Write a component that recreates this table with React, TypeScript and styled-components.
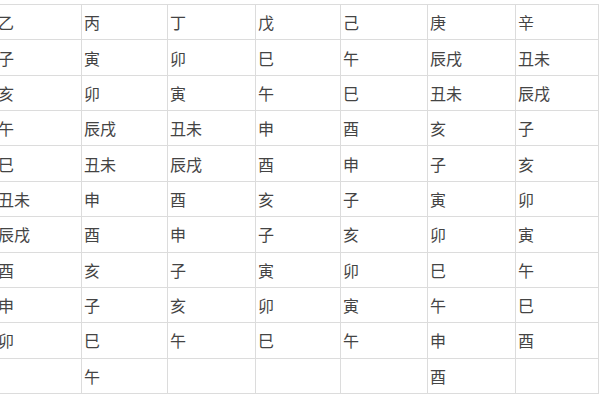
import React from 'react';
import styled, { createGlobalStyle } from 'styled-components';

const GlobalStyle = createGlobalStyle`
  html, body {
    margin: 0;
    padding: 0;
    background: #fff;
    overflow: hidden;
  }
`;

const Wrapper = styled.div`
  width: 600px;
  height: 400px;
  padding-top: 4px;
  box-sizing: border-box;
  overflow: hidden;
`;

const Table = styled.table`
  border-collapse: collapse;
  table-layout: fixed;
  margin-left: -5px;
  font-family: 'Noto Sans CJK SC', 'Noto Sans', sans-serif;
  font-size: 16px;
  color: #444;
`;

const Cell = styled.td<{ $w: number }>`
  width: ${(props) => props.$w}px;
  height: 35.36px;
  padding: 0 0 0 2px;
  box-sizing: border-box;
  border: 1px solid #dcdcdc;
  vertical-align: middle;
  line-height: 1;
  white-space: nowrap;
`;

const widths = [86, 86, 88, 85, 87, 88, 83];

const rows = [
  ['乙', '丙', '丁', '戊', '己', '庚', '辛'],
  ['子', '寅', '卯', '巳', '午', '辰戌', '丑未'],
  ['亥', '卯', '寅', '午', '巳', '丑未', '辰戌'],
  ['午', '辰戌', '丑未', '申', '酉', '亥', '子'],
  ['巳', '丑未', '辰戌', '酉', '申', '子', '亥'],
  ['丑未', '申', '酉', '亥', '子', '寅', '卯'],
  ['辰戌', '酉', '申', '子', '亥', '卯', '寅'],
  ['酉', '亥', '子', '寅', '卯', '巳', '午'],
  ['申', '子', '亥', '卯', '寅', '午', '巳'],
  ['卯', '巳', '午', '巳', '午', '申', '酉'],
  ['', '午', '', '', '', '酉', ''],
];

const App = () => (
  <Wrapper>
    <GlobalStyle />
    <Table>
      <tbody>
        {rows.map((row, i) => (
          <tr key={i}>
            {row.map((text, j) => (
              <Cell key={j} $w={widths[j]}>
                {text}
              </Cell>
            ))}
          </tr>
        ))}
      </tbody>
    </Table>
  </Wrapper>
);

export default App;
